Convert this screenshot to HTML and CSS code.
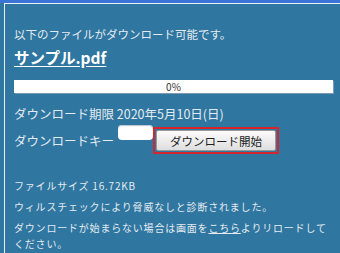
FILE: index.html
```html
<!DOCTYPE html>
<html lang="ja">
<head>
<meta charset="utf-8">
<link rel="stylesheet" href="styles.css">
</head>
<body>
<div class="topbar"></div>
<div class="panel">
  <p class="intro">以下のファイルがダウンロード可能です。</p>
  <a class="filename" href="#">サンプル.pdf</a>
  <div class="progress">0%</div>
  <p class="deadline">ダウンロード期限 2020年5月10日(日)</p>
  <div class="keyrow">
    <span class="keylabel">ダウンロードキー</span>
    <span class="keyinput"></span>
    <span class="highlight"><button class="startbtn">ダウンロード開始</button></span>
  </div>
  <div class="info">
    <p class="line">ファイルサイズ 16.72KB</p>
    <p class="line">ウィルスチェックにより脅威なしと診断されました。</p>
    <p class="line last">ダウンロードが始まらない場合は画面を<a class="here" href="#">こちら</a>よりリロードしてください。</p>
  </div>
</div>
</body>
</html>
```

FILE: styles.css
```css
html, body {
  margin: 0;
  padding: 0;
  background: #2f76a0;
  overflow: hidden;
}
body {
  width: 340px;
  height: 253px;
  font-family: "Noto Sans CJK JP", "Noto Sans", sans-serif;
  color: #e3ebf1;
}
.topbar {
  height: 3px;
  background: #3a74d6;
}
.panel {
  margin-left: 4px;
  border-top: 1px solid #e8f0f6;
  border-left: 1px solid #e8f0f6;
  padding: 21px 7px 0 9px;
  height: 228px;
  box-sizing: border-box;
  height: 250px;
}
.intro {
  margin: 0;
  font-size: 11.5px;
  line-height: 18px;
}
.filename {
  display: inline-block;
  margin-top: 4px;
  font-size: 15.5px;
  font-weight: bold;
  line-height: 20px;
  color: #ffffff;
  text-decoration: underline;
  text-underline-offset: 2px;
}
.progress {
  margin-top: 11px;
  height: 13px;
  background: #ffffff;
  box-shadow: 1px 1px 0 #7d9bb0;
  color: #333333;
  font-size: 10px;
  line-height: 13px;
  text-align: center;
}
.deadline {
  margin: 12px 0 0;
  font-size: 12.5px;
  line-height: 18px;
}
.keyrow {
  display: flex;
  align-items: center;
  margin-top: 2px;
  font-size: 12.5px;
}
.keylabel {
  line-height: 18px;
}
.keyinput {
  width: 35px;
  height: 15px;
  margin: 0 0 16px 4px;
  background: #ffffff;
  border-radius: 4px;
  box-shadow: inset 0 1px 1px #b8c4cc;
}
.highlight {
  display: inline-flex;
  border: 2px solid #d4262c;
  padding: 1px;
}
.startbtn {
  width: 120px;
  height: 21px;
  padding: 0;
  border: 1px solid #9a9a9a;
  border-radius: 2px;
  background: linear-gradient(#fbfbfb, #dedede);
  font-family: "Noto Sans CJK JP", "Noto Sans", sans-serif;
  font-size: 11.5px;
  color: #222222;
}
.info {
  margin-top: 22px;
}
.line {
  margin: 0 0 5px;
  font-size: 10px;
  letter-spacing: 0.8px;
  line-height: 16px;
}
.line.last {
  margin-bottom: 0;
}
.here {
  color: #e3ebf1;
  text-decoration: underline;
}
```
